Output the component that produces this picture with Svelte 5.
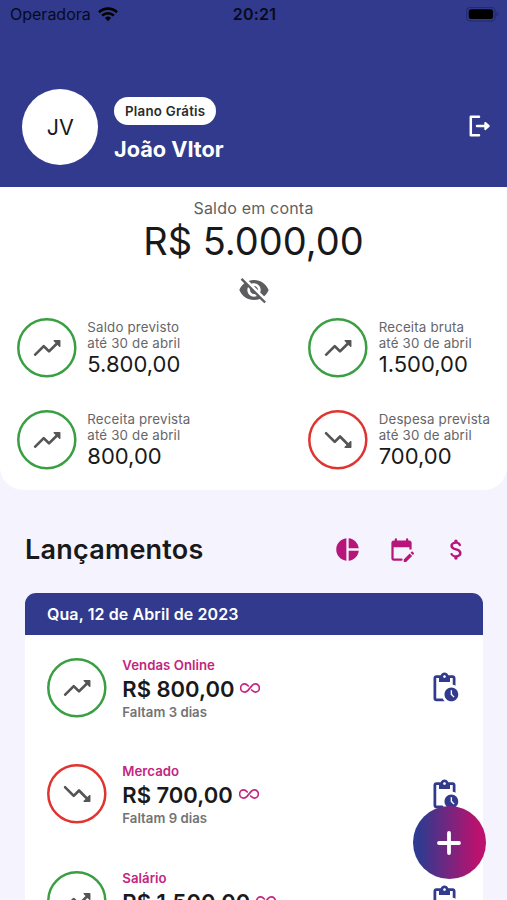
<script>
  const icons = {
    up: 'M16.85 6.85l1.44 1.44-4.88 4.88-3.29-3.29a1 1 0 0 0-1.41 0L2.3 16.28a1 1 0 1 0 1.41 1.41L9.41 12l3.29 3.29a1 1 0 0 0 1.41 0l5.59-5.58 1.44 1.44A.5.5 0 0 0 22 10.8V6.5a.5.5 0 0 0-.5-.5h-4.29a.5.5 0 0 0-.36.85z',
    down: 'M16.85 17.15l1.44-1.44-4.88-4.88-3.29 3.29a1 1 0 0 1-1.41 0L2.3 7.72a1 1 0 1 1 1.41-1.41L9.41 12l3.29-3.29a1 1 0 0 1 1.41 0l5.59 5.58 1.44-1.44a.5.5 0 0 1 .86.35v4.3a.5.5 0 0 1-.5.5h-4.29a.5.5 0 0 1-.36-.85z',
    hidden: 'M12 7c2.76 0 5 2.24 5 5 0 .65-.13 1.26-.36 1.83l2.92 2.92c1.51-1.26 2.7-2.89 3.43-4.75-1.73-4.39-6-7.5-11-7.5-1.4 0-2.74.25-3.98.7l2.16 2.16C10.74 7.13 11.35 7 12 7zM2 4.27l2.28 2.28.46.46C3.08 8.3 1.78 10.02 1 12c1.73 4.39 6 7.5 11 7.5 1.55 0 3.03-.3 4.38-.84l.42.42L19.73 22 21 20.73 3.27 3 2 4.27zM7.53 9.8l1.55 1.55c-.05.21-.08.43-.08.65 0 1.66 1.34 3 3 3 .22 0 .44-.03.65-.08l1.55 1.55c-.67.33-1.41.53-2.2.53-2.76 0-5-2.24-5-5 0-.79.2-1.53.53-2.2zm4.31-.78l3.15 3.15.02-.16c0-1.66-1.34-3-3-3l-.17.01z',
    pie: 'M11 2v20c-5.07-.5-9-4.79-9-10s3.93-9.5 9-10zm2.03 0v8.99H22c-.47-4.74-4.24-8.52-8.97-8.99zm0 11.01V22c4.74-.47 8.5-4.25 8.97-8.99h-8.97z',
    calendar: 'M12 22H5c-1.11 0-2-.9-2-2L3.01 6c0-1.1.88-2 1.99-2h1V3a1 1 0 0 1 2 0v1h8V3a1 1 0 0 1 2 0v1h1c1.1 0 2 .9 2 2v6h-2v-2H5v10h7a1 1 0 0 1 0 2zm10.13-5.01.71-.71c.39-.39.39-1.02 0-1.41l-.71-.71c-.39-.39-1.02-.39-1.41 0l-.71.71 2.12 2.12zm-.71.71-5.3 5.3H14v-2.12l5.3-5.3 2.12 2.12z',
    money: 'M11.8 10.9c-2.27-.59-3-1.2-3-2.15 0-1.09 1.01-1.85 2.7-1.85 1.42 0 2.13.54 2.39 1.4.12.4.45.7.87.7h.3c.66 0 1.13-.65.9-1.27-.42-1.18-1.4-2.16-2.96-2.54V4.5c0-.83-.67-1.5-1.5-1.5S10 3.67 10 4.5v.66c-1.94.42-3.5 1.68-3.5 3.61 0 2.31 1.91 3.46 4.7 4.13 2.5.6 3 1.48 3 2.41 0 .69-.49 1.79-2.7 1.79-1.65 0-2.5-.59-2.83-1.43-.15-.39-.49-.67-.9-.67h-.28c-.67 0-1.14.68-.89 1.3.57 1.39 1.9 2.21 3.4 2.53v.67c0 .83.67 1.5 1.5 1.5s1.5-.67 1.5-1.5v-.65c1.95-.37 3.5-1.5 3.5-3.55 0-2.84-2.43-3.81-4.7-4.4z',
    pending: 'M17 12c-2.76 0-5 2.24-5 5s2.24 5 5 5 5-2.24 5-5-2.24-5-5-5zm1.65 7.35L16.5 17.2V14h1v2.79l1.85 1.85-.7.71zM18 3h-3.18C14.4 1.84 13.3 1 12 1s-2.4.84-2.82 2H6c-1.1 0-2 .9-2 2v15c0 1.1.9 2 2 2h6.11c-.59-.57-1.07-1.25-1.42-2H6V5h2v3h8V5h2v5.08c.71.1 1.38.31 2 .6V5c0-1.1-.9-2-2-2zm-6 2c-.55 0-1-.45-1-1s.45-1 1-1 1 .45 1 1-.45 1-1 1z'
  };

  const stats = [
    { label: 'Saldo previsto', value: '5.800,00', trend: 'up' },
    { label: 'Receita bruta', value: '1.500,00', trend: 'up' },
    { label: 'Receita prevista', value: '800,00', trend: 'up' },
    { label: 'Despesa prevista', value: '700,00', trend: 'down' }
  ];

  const entries = [
    { title: 'Vendas Online', amount: 'R$ 800,00', due: 'Faltam 3 dias', trend: 'up' },
    { title: 'Mercado', amount: 'R$ 700,00', due: 'Faltam 9 dias', trend: 'down' },
    { title: 'Salário', amount: 'R$ 1.500,00', due: '', trend: 'up' }
  ];
</script>

{#snippet icon(name, size)}
  <svg class="icon" width={size} height={size} viewBox="0 0 24 24"><path d={icons[name]} /></svg>
{/snippet}

{#snippet ring(trend)}
  <svg class="ring" width="60" height="60" viewBox="0 0 60 60">
    <circle cx="29.8" cy="29.8" r="28.5" fill="none" stroke={trend === 'up' ? '#3a9f42' : '#df3430'} stroke-width="2.5" />
    <path d={icons[trend]} fill="#555557" transform="translate(14.2 14) scale(1.33)" />
  </svg>
{/snippet}

<div class="screen">
  <header>
    <div class="status">
      <div class="carrier">
        <span>Operadora</span>
        <svg width="20" height="15" viewBox="0 0 20 15" fill="none" stroke="#000" stroke-width="2.6">
          <path d="M1 5.2a13 13 0 0 1 18 0" />
          <path d="M4.2 8.6a8.3 8.3 0 0 1 11.6 0" />
          <path d="M7 10.9a4.4 4.4 0 0 1 6 0L10 14.2z" fill="#000" stroke="none" />
        </svg>
      </div>
      <span class="clock">20:21</span>
      <div class="power">
        <svg width="33" height="16" viewBox="0 0 33 16">
          <rect x="0.6" y="0.4" width="28.6" height="13.6" rx="4" fill="none" stroke="#242a6c" stroke-width="1.1" />
          <rect x="2.7" y="2.3" width="24.4" height="9.8" rx="2.4" />
          <path d="M30.6 5.1q1.6.6 1.6 2.1t-1.6 2.1z" fill="#242a6c" />
        </svg>
      </div>
    </div>
    <div class="profile">
      <div class="avatar">JV</div>
      <div class="who">
        <span class="plan">Plano Grátis</span>
        <span class="name">João VItor</span>
      </div>
      <svg class="logout" width="24" height="24" viewBox="0 0 24 24" fill="none" stroke="#fff" stroke-width="2.5" stroke-linecap="round" stroke-linejoin="round">
        <path d="M11 2.8H2.8V21.2H11" />
        <path d="M9 12H19" />
        <path d="M17.2 8.8L20.9 12l-3.7 3.2z" fill="#fff" stroke-width="1.8" />
      </svg>
    </div>
  </header>

  <section class="summary">
    <div class="caption">Saldo em conta</div>
    <div class="total">R$ 5.000,00</div>
    <div class="eye">{@render icon('hidden', 32)}</div>
    <div class="stats">
      {#each stats as s}
        <div class="stat">
          {@render ring(s.trend)}
          <div class="figures">
            <div class="label">{s.label}</div>
            <div class="label">até 30 de abril</div>
            <div class="value">{s.value}</div>
          </div>
        </div>
      {/each}
    </div>
  </section>

  <div class="heading">
    <h2>Lançamentos</h2>
    <div class="actions">
      {@render icon('pie', 27)}
      {@render icon('calendar', 27)}
      {@render icon('money', 27)}
    </div>
  </div>

  <section class="list">
    <div class="date">Qua, 12 de Abril de 2023</div>
    {#each entries as e}
      <div class="entry">
        {@render ring(e.trend)}
        <div class="info">
          <div class="title">{e.title}</div>
          <div class="amount">
            <span>{e.amount}</span>
            <svg width="20" height="12" viewBox="0 0 20 12" fill="none" stroke="#c4257f" stroke-width="1.7" stroke-linecap="round">
              <path d="M8.3 4C7 2.6 6 1.9 4.7 1.9a4.1 4.1 0 0 0 0 8.2c1.4 0 2.3-.6 3.3-1.7l4-4.8c1-1.1 1.9-1.7 3.3-1.7a4.1 4.1 0 0 1 0 8.2c-1.3 0-2.3-.7-3.6-2.1" />
            </svg>
          </div>
          <div class="due">{e.due}</div>
        </div>
        <div class="pending">{@render icon('pending', 33)}</div>
      </div>
    {/each}
  </section>

  <button class="fab" aria-label="+">
    <svg width="26" height="26" viewBox="0 0 26 26" fill="none" stroke="#fff" stroke-width="3.8" stroke-linecap="round">
      <path d="M13 3v20M3 13h20" />
    </svg>
  </button>
</div>

<style>
  .screen {
    position: relative;
    width: 507px;
    height: 900px;
    overflow: hidden;
    background: #f5f4fe;
    color: #19191b;
    font-family: Inter, 'Liberation Sans', sans-serif;
  }
  .icon { display: block; fill: currentColor; flex: none; }
  header {
    height: 186.5px;
    background: #313a8d;
  }
  .status {
    display: grid;
    grid-template-columns: 1fr auto 1fr;
    align-items: center;
    height: 29px;
    padding: 0 8px 0 10px;
    color: #080a1c;
    font-size: 16px;
    line-height: 29px;
  }
  .carrier { display: flex; align-items: center; gap: 7px; }
  .clock { font-weight: 600; letter-spacing: 0.2px; }
  .power { display: flex; justify-content: flex-end; }
  .profile {
    display: flex;
    align-items: center;
    margin-top: 60.4px;
    padding: 0 15px 0 22.4px;
  }
  .avatar {
    width: 76px;
    height: 76px;
    border-radius: 50%;
    background: #fff;
    font-size: 21.5px;
    line-height: 77px;
    text-align: center;
  }
  .who { display: flex; flex-direction: column; align-items: flex-start; margin-left: 15.6px; padding-top: 5px; }
  .plan {
    height: 27.5px;
    padding: 0 11px;
    border-radius: 14px;
    background: #fff;
    color: #2b2b2d;
    font-size: 13.3px;
    font-weight: 600;
    letter-spacing: 0.24px;
    line-height: 29px;
  }
  .name { margin-top: 11px; color: #fff; font-size: 21.7px; font-weight: 700; line-height: 27px; }
  .logout { margin: 0 0 3px auto; }

  .summary {
    height: 303.5px;
    border-radius: 0 0 23px 23px;
    background: #fff;
    box-sizing: border-box;
    padding-top: 11px;
  }
  .caption { color: #5f5f61; font-size: 16px; line-height: 20px; text-align: center; letter-spacing: 0.2px; }
  .total { font-size: 38px; line-height: 46px; text-align: center; }
  .eye { display: flex; justify-content: center; margin-top: 10px; color: #5d5d5f; }
  .stats {
    display: grid;
    grid-template-columns: 291.4px 1fr;
    row-gap: 32px;
    margin-top: 12px;
    padding-left: 16.8px;
  }
  .stat { display: flex; height: 60px; gap: 10.5px; }
  .ring { display: block; flex: none; }
  .figures { padding-top: 1.5px; }
  .label { color: #666668; font-size: 13.3px; line-height: 16px; letter-spacing: 0.18px; }
  .value { font-size: 22px; line-height: 27.5px; }

  .heading {
    display: flex;
    align-items: center;
    justify-content: space-between;
    height: 102.5px;
    padding: 17px 37.5px 0 25px;
    box-sizing: border-box;
  }
  h2 { margin: 0; font-size: 27px; font-weight: 600; letter-spacing: 0.22px; }
  .actions { display: flex; gap: 27.3px; color: #b8157a; }

  .list { margin: 0 24.5px 0 25px; border-radius: 11px 11px 0 0; background: #fff; overflow: hidden; }
  .date {
    height: 42px;
    padding-left: 22px;
    background: #313a8d;
    color: #fff;
    font-size: 16px;
    font-weight: 600;
    letter-spacing: 0.1px;
    line-height: 43px;
  }
  .entry { display: flex; height: 106.5px; padding: 23px 21.5px 0 21.7px; box-sizing: border-box; }
  .info { margin: -1px 0 0 15.6px; }
  .title { color: #c4257f; font-size: 13.2px; font-weight: 600; line-height: 16px; letter-spacing: 0.05px; }
  .amount { display: flex; align-items: center; gap: 6px; font-size: 22px; font-weight: 600; line-height: 32px; }
  .amount svg { margin-bottom: 2px; }
  .due { color: #737375; font-size: 13.2px; font-weight: 600; line-height: 15px; letter-spacing: 0.02px; }
  .pending { margin: 13.5px 0 0 auto; color: #313a8d; }

  .fab {
    position: absolute;
    left: 412.5px;
    top: 806px;
    display: flex;
    align-items: center;
    justify-content: center;
    width: 73px;
    height: 73px;
    padding: 0;
    border: 0;
    border-radius: 50%;
    background: linear-gradient(90deg, #2f3a90 8%, #b9126f 88%);
  }
</style>
